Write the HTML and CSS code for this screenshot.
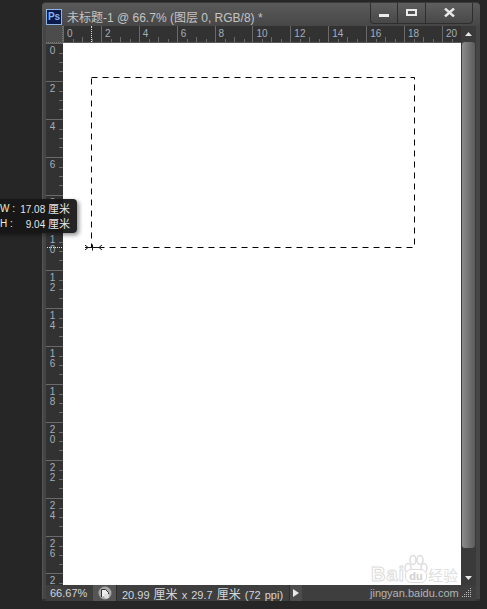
FILE: index.html
```html
<!DOCTYPE html>
<html lang="en">
<head>
    <meta charset="UTF-8">
    <title>未标题-1 @ 66.7% (图层 0, RGB/8) *</title>
    <link rel="stylesheet" href="styles.css">
</head>
<body>
    <div class="window">
        <div class="titlebar">
            <div class="ps-logo">Ps</div>
            <div class="doc-title">未标题-1 @ 66.7% (图层 0, RGB/8) *</div>
            <div class="win-buttons">
                <div class="win-btn btn-min"><span class="icon-min"></span></div>
                <div class="win-btn btn-max"><span class="icon-max"></span></div>
                <div class="win-btn btn-close">
                    <svg width="11" height="9" viewBox="0 0 11 9"><path d="M1 .5l9 8M10 .5l-9 8" stroke="#e8e8e8" stroke-width="2.400" fill="none"/></svg>
                </div>
            </div>
        </div>

        <div class="doc">
            <div class="ruler-corner"></div>
            <div class="ruler-top">
                <span class="cell-h">0</span>
                <span class="cell-h">2</span>
                <span class="cell-h">4</span>
                <span class="cell-h">6</span>
                <span class="cell-h">8</span>
                <span class="cell-h">10</span>
                <span class="cell-h">12</span>
                <span class="cell-h">14</span>
                <span class="cell-h">16</span>
                <span class="cell-h">18</span>
                <span class="cell-h">20</span>
                <i class="marker-h"></i>
            </div>
            <div class="scrollbar">
                <svg class="arrow" width="7" height="4" viewBox="0 0 7 4"><path d="M3.500 0L7 4H0z" fill="#e6e6e6"/></svg>
                <div class="thumb"></div>
                <svg class="arrow" width="7" height="4" viewBox="0 0 7 4"><path d="M0 0h7L3.500 4z" fill="#e6e6e6"/></svg>
            </div>
            <div class="ruler-left">
                <span class="cell-v">0</span>
                <span class="cell-v">2</span>
                <span class="cell-v">4</span>
                <span class="cell-v">6</span>
                <span class="cell-v">8</span>
                <span class="cell-v">1<br>0</span>
                <span class="cell-v">1<br>2</span>
                <span class="cell-v">1<br>4</span>
                <span class="cell-v">1<br>6</span>
                <span class="cell-v">1<br>8</span>
                <span class="cell-v">2<br>0</span>
                <span class="cell-v">2<br>2</span>
                <span class="cell-v">2<br>4</span>
                <span class="cell-v">2<br>6</span>
                <span class="cell-v">2</span>
                <i class="marker-v"></i>
            </div>
            <div class="canvas">
                <svg class="selection" width="397" height="542" viewBox="0 0 397 542">
                    <rect x="28.500" y="34.500" width="323" height="170" fill="none" stroke="#000" stroke-dasharray="6 5"/>
                    <path d="M22 204.500h17M22 202l3 2.500-3 2.500M29.500 201.500v6M39 202l-3 2.500 3 2.500" fill="none" stroke="#111"/>
                </svg>
                <div class="watermark">
                    <span class="wm-bai">Bai</span>
                    <svg class="wm-paw" width="24" height="22" viewBox="0 0 24 22">
                        <g fill="#fff" stroke="#dcdcdc" stroke-width="1.500">
                            <ellipse cx="4" cy="13" rx="3" ry="4.500"/>
                            <ellipse cx="9" cy="5" rx="3" ry="4.500"/>
                            <ellipse cx="16" cy="5" rx="3" ry="4.500"/>
                            <ellipse cx="20" cy="13" rx="3" ry="4.500"/>
                        </g>
                    </svg>
                    <span class="wm-du">du</span>
                    <span class="wm-jy">经验</span>
                </div>
            </div>
        </div>

        <div class="statusbar">
            <div class="zoom-val">66.67%</div>
            <div class="status-icon">
                <svg width="14" height="14" viewBox="0 0 14 14">
                    <circle cx="7" cy="7" r="6.500" fill="#a8a8a8"/>
                    <path d="M3.500 11V3.500h4l3 3v1.500" fill="#eee" stroke="#333"/>
                    <circle cx="8.500" cy="10" r="2.500" fill="#ddd"/>
                </svg>
            </div>
            <div class="doc-info">20.99 <span class="cjk">厘米</span> x 29.7 <span class="cjk">厘米</span> (72 ppi)</div>
            <div class="status-arrow"><span></span></div>
            <div class="site-name">jingyan.baidu.com</div>
            <svg class="grip" width="11" height="11" viewBox="0 0 11 11" fill="#bbb">
                <path d="M9 1h1v1H9zM7 3h1v1H7zM9 3h1v1H9zM5 5h1v1H5zM7 5h1v1H7zM9 5h1v1H9zM3 7h1v1H3zM5 7h1v1H5zM7 7h1v1H7zM9 7h1v1H9zM1 9h1v1H1zM3 9h1v1H3zM5 9h1v1H5zM7 9h1v1H7zM9 9h1v1H9z"/>
            </svg>
        </div>
    </div>

    <div class="size-tip">
        <div class="tip-row"><span class="tip-key">W :</span><span class="tip-val">17.08 <span class="cjk">厘米</span></span></div>
        <div class="tip-row"><span class="tip-key">H :</span><span class="tip-val">9.04 <span class="cjk">厘米</span></span></div>
    </div>
</body>
</html>
```

FILE: styles.css
```css
html, body {
    margin: 0;
    height: 100%;
}
body {
    position: relative;
    width: 487px;
    height: 609px;
    overflow: hidden;
    padding: 2px 0 0 42px;
    box-sizing: border-box;
    background: #262626;
    font-family: "Liberation Sans", "Noto Sans CJK SC", sans-serif;
}
.cjk {
    font-size: 12px;
}
.window {
    width: 438px;
    height: 599px;
    box-sizing: border-box;
    padding: 0 4px;
    background: #454545;
    border-top: 1px solid #3a3a3a;
    border-bottom: 2px solid #333;
    border-radius: 4px 4px 0 0;
    box-shadow: inset 1px 0 0 #555;
}

/* title bar */
.titlebar {
    display: flex;
    align-items: center;
    height: 23px;
    background: linear-gradient(#5a5a5a, #474747);
    margin: 0 -4px;
    padding: 0 7px 0 4px;
    border-radius: 4px 4px 0 0;
}
.ps-logo {
    width: 14px;
    height: 14px;
    margin-top: 4px;
    border: 1px solid #8db4e8;
    background: #0a1a4a;
    color: #8ab6f0;
    font: bold 10px/14px "Liberation Sans", sans-serif;
    text-align: center;
}
.doc-title {
    margin: 3px 0 0 5px;
    color: #c4c4c4;
    font-size: 12px;
    white-space: nowrap;
}
.win-buttons {
    display: flex;
    height: 20px;
    margin: -3px 0 0 auto;
    border: 1px solid #2e2e2e;
    border-top: 0;
    border-radius: 0 0 4px 4px;
    background: linear-gradient(#5f5f5f, #484848);
}
.win-btn {
    display: flex;
    align-items: center;
    justify-content: center;
    box-sizing: border-box;
    border-right: 1px solid #2e2e2e;
}
.btn-min { width: 27px; }
.btn-max { width: 28px; }
.btn-close { width: 46px; border-right: 0; }
.icon-min {
    width: 10px;
    height: 3px;
    margin-top: 6px;
    background: #ececec;
}
.icon-max {
    width: 7px;
    height: 3px;
    border: 2px solid #ececec;
}

/* document area */
.doc {
    display: grid;
    grid-template-columns: 17px 398px 15px;
    grid-template-rows: 17px 542px;
}
.ruler-corner {
    background: #4c4c4c;
    border-right: 1px dotted #777;
    border-bottom: 1px dotted #777;
    box-sizing: border-box;
}
.ruler-top {
    position: relative;
    display: flex;
    background: #323232;
    border-bottom: 1px solid #5a5a5a;
    box-sizing: border-box;
    overflow: hidden;
}
.cell-h {
    flex: 0 0 37.9px;
    box-sizing: border-box;
    padding: 2px 0 0 3px;
    border-left: 1px solid #6a6a6a;
    color: #a3afbb;
    font-size: 10px;
    line-height: 11px;
    background-image: linear-gradient(#6a6a6a, #6a6a6a), linear-gradient(#6a6a6a, #6a6a6a), linear-gradient(#6a6a6a, #6a6a6a);
    background-size: 1px 3px, 1px 5px, 1px 3px;
    background-position: 9px 100%, 18px 100%, 28px 100%;
    background-repeat: no-repeat;
}
.marker-h {
    position: absolute;
    left: 28px;
    top: 0;
    height: 16px;
    border-left: 1px dotted #ddd;
}
.ruler-left {
    position: relative;
    display: flex;
    flex-direction: column;
    background: #323232;
    overflow: hidden;
}
.cell-v {
    flex: 0 0 37.9px;
    width: 17px;
    box-sizing: border-box;
    padding: 2px 6px 0 2px;
    border-top: 1px solid #6a6a6a;
    color: #a3afbb;
    font-size: 10px;
    line-height: 10px;
    text-align: center;
    background-image: linear-gradient(#6a6a6a, #6a6a6a), linear-gradient(#6a6a6a, #6a6a6a), linear-gradient(#6a6a6a, #6a6a6a);
    background-size: 4px 1px, 4px 1px, 4px 1px;
    background-position: 100% 9px, 100% 18px, 100% 27px;
    background-repeat: no-repeat;
}
.marker-v {
    position: absolute;
    left: 1px;
    top: 204px;
    width: 15px;
    border-top: 1px dotted #ddd;
}
.canvas {
    position: relative;
    background: #fff;
}
.selection {
    position: absolute;
    left: 0;
    top: 0;
}

/* scrollbar runs beside the top ruler too */
.scrollbar {
    grid-column: 3;
    grid-row: 1 / 3;
    display: flex;
    flex-direction: column;
    align-items: center;
    background: #3a3a3a;
    padding: 6px 0 5px;
    box-sizing: border-box;
}
.thumb {
    flex: 1;
    width: 13px;
    margin: 6px 0 28px;
    border-radius: 3px;
    background: linear-gradient(90deg, #8c8c8c, #6e6e6e 60%, #5c5c5c);
}
.arrow { display: block; }

/* status bar */
.statusbar {
    position: relative;
    display: flex;
    align-items: center;
    height: 16px;
    color: #d2d6da;
    font-size: 11px;
    background: #3e3e3e;
}
.zoom-val {
    width: 47px;
    padding-left: 4px;
    box-sizing: border-box;
}
.status-icon {
    display: flex;
    align-items: center;
    justify-content: center;
    width: 24px;
    height: 16px;
    background: #555;
    border-right: 1px solid #2c2c2c;
    box-sizing: border-box;
}
.doc-info {
    width: 172px;
    padding-left: 5px;
    box-sizing: border-box;
    white-space: nowrap;
    word-spacing: 1px;
}
.status-arrow {
    display: flex;
    align-items: center;
    justify-content: center;
    width: 12px;
    height: 16px;
    background: #4c4c4c;
    border-left: 1px solid #2c2c2c;
}
.status-arrow span {
    border-left: 6px solid #e8e8e8;
    border-top: 4px solid transparent;
    border-bottom: 4px solid transparent;
}
.site-name {
    margin-left: 68px;
    color: #b4b4b4;
    font-size: 11px;
    white-space: nowrap;
}
.grip {
    position: absolute;
    right: 4px;
    bottom: 3px;
}

/* overlays */
.size-tip {
    position: absolute;
    left: -6px;
    top: 199px;
    width: 83px;
    height: 34px;
    box-sizing: border-box;
    padding: 3px 7px 0 6px;
    background: rgba(22, 22, 22, 0.94);
    border-radius: 0 4px 4px 0;
    box-shadow: 2px 2px 4px rgba(0, 0, 0, 0.45);
    color: #e4e4e4;
    font-size: 10px;
    line-height: 14px;
}
.tip-val .cjk {
    font-size: 11px;
}
.tip-row {
    display: flex;
    justify-content: space-between;
    white-space: nowrap;
}
.tip-key { color: #f0ecc0; }
.watermark {
    position: absolute;
    right: 2px;
    bottom: 0;
    width: 88px;
    height: 30px;
    white-space: nowrap;
}
.wm-bai {
    position: absolute;
    left: 0;
    bottom: 2px;
    font: bold 20px/18px "Liberation Sans", sans-serif;
    letter-spacing: 1px;
    color: #fff;
    -webkit-text-stroke: 1px #dcdcdc;
}
.wm-paw {
    position: absolute;
    left: 33px;
    top: 0;
}
.wm-du {
    position: absolute;
    left: 34px;
    bottom: 2px;
    width: 20px;
    height: 12px;
    border-radius: 6px;
    background: #fff;
    border: 1px solid #dcdcdc;
    color: #cfcfcf;
    font: bold 11px/12px "Liberation Sans", sans-serif;
    text-align: center;
}
.wm-jy {
    position: absolute;
    right: 1px;
    bottom: 3px;
    font: 15px/15px "Noto Sans CJK SC", sans-serif;
    color: #e0e0e0;
}
```
